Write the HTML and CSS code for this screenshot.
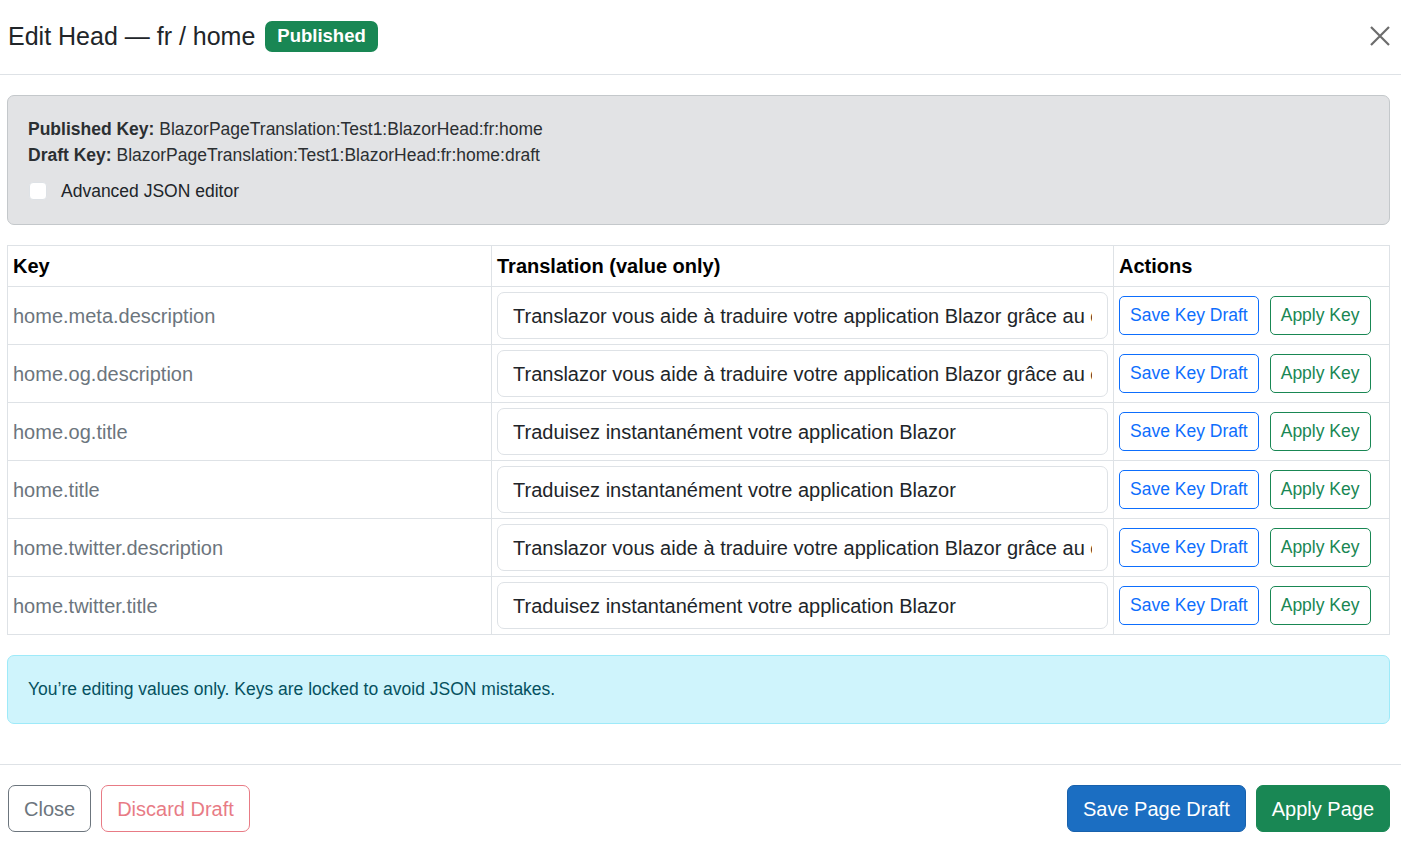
FILE: index.html
```html
<!DOCTYPE html>
<html lang="fr">

<head>
    <meta charset="UTF-8">
    <meta name="viewport" content="width=device-width, initial-scale=1.0">
    <title>Edit Head</title>
    <link rel="stylesheet" href="styles.css">
</head>

<body>

    <div class="modal">
        <div class="modal-header">
            <h5 class="modal-title">Edit Head — fr / home <span class="badge">Published</span></h5>
            <button class="btn-close" aria-label="Close">
                <svg width="20" height="20" viewBox="0 0 20 20">
                    <path d="M1 1 L19 19 M19 1 L1 19" stroke="#6c6c6c" stroke-width="2.2" fill="none" />
                </svg>
            </button>
        </div>

        <div class="modal-body">
            <div class="alert alert-secondary">
                <div><strong>Published Key:</strong> BlazorPageTranslation:Test1:BlazorHead:fr:home</div>
                <div><strong>Draft Key:</strong> BlazorPageTranslation:Test1:BlazorHead:fr:home:draft</div>
                <label class="form-check">
                    <span class="check-box"></span>
                    Advanced JSON editor
                </label>
            </div>

            <table class="keys-table">
                <thead>
                    <tr>
                        <th class="col-key">Key</th>
                        <th class="col-value">Translation (value only)</th>
                        <th class="col-actions">Actions</th>
                    </tr>
                </thead>
                <tbody>
                    <tr>
                        <td class="key">home.meta.description</td>
                        <td><input class="form-control" type="text" value="Translazor vous aide à traduire votre application Blazor grâce au cloud et à l'IA."></td>
                        <td class="actions"><button class="btn btn-sm btn-outline-primary">Save Key Draft</button><button class="btn btn-sm btn-outline-success">Apply Key</button></td>
                    </tr>
                    <tr>
                        <td class="key">home.og.description</td>
                        <td><input class="form-control" type="text" value="Translazor vous aide à traduire votre application Blazor grâce au cloud et à l'IA."></td>
                        <td class="actions"><button class="btn btn-sm btn-outline-primary">Save Key Draft</button><button class="btn btn-sm btn-outline-success">Apply Key</button></td>
                    </tr>
                    <tr>
                        <td class="key">home.og.title</td>
                        <td><input class="form-control" type="text" value="Traduisez instantanément votre application Blazor"></td>
                        <td class="actions"><button class="btn btn-sm btn-outline-primary">Save Key Draft</button><button class="btn btn-sm btn-outline-success">Apply Key</button></td>
                    </tr>
                    <tr>
                        <td class="key">home.title</td>
                        <td><input class="form-control" type="text" value="Traduisez instantanément votre application Blazor"></td>
                        <td class="actions"><button class="btn btn-sm btn-outline-primary">Save Key Draft</button><button class="btn btn-sm btn-outline-success">Apply Key</button></td>
                    </tr>
                    <tr>
                        <td class="key">home.twitter.description</td>
                        <td><input class="form-control" type="text" value="Translazor vous aide à traduire votre application Blazor grâce au cloud et à l'IA."></td>
                        <td class="actions"><button class="btn btn-sm btn-outline-primary">Save Key Draft</button><button class="btn btn-sm btn-outline-success">Apply Key</button></td>
                    </tr>
                    <tr>
                        <td class="key">home.twitter.title</td>
                        <td><input class="form-control" type="text" value="Traduisez instantanément votre application Blazor"></td>
                        <td class="actions"><button class="btn btn-sm btn-outline-primary">Save Key Draft</button><button class="btn btn-sm btn-outline-success">Apply Key</button></td>
                    </tr>
                </tbody>
            </table>

            <div class="alert alert-info">
                You’re editing values only. Keys are locked to avoid JSON mistakes.
            </div>
        </div>

        <div class="modal-footer">
            <div class="footer-left">
                <button class="btn btn-outline-secondary">Close</button>
                <button class="btn btn-outline-danger" disabled>Discard Draft</button>
            </div>
            <div class="footer-right">
                <button class="btn btn-primary">Save Page Draft</button>
                <button class="btn btn-success">Apply Page</button>
            </div>
        </div>
    </div>

</body>

</html>
```

FILE: styles.css
```css
body {
    font-family: "Liberation Sans", Arial, sans-serif;
    font-size: 20px;
    line-height: 1.5;
    color: #212529;
    margin: 0;
    padding: 0;
    background-color: white;
}

.modal {
    display: flex;
    flex-direction: column;
    padding: 0 11px 0 7px;
}

/* header */
.modal-header {
    display: flex;
    align-items: center;
    justify-content: space-between;
    height: 75px;
    box-sizing: border-box;
    padding: 0 11px 3px 8px;
    border-bottom: 1px solid #dee2e6;
    margin: 0 -11px 0 -7px;
}

.modal-title {
    margin: 0;
    font-size: 25px;
    font-weight: 400;
    line-height: 1.2;
    display: flex;
    align-items: center;
    gap: 10px;
}

.badge {
    display: inline-block;
    background-color: #198754;
    color: white;
    font-size: 18.5px;
    font-weight: bold;
    line-height: 1;
    padding: 6px 12px;
    border-radius: 7px;
    margin-top: 2px;
}

.btn-close {
    border: none;
    background: none;
    padding: 0;
    width: 20px;
    height: 20px;
    cursor: pointer;
    display: flex;
    margin-top: 1px;
}

/* body */
.modal-body {
    padding: 20px 0;
}

.alert {
    border: 1px solid transparent;
    border-radius: 7px;
    padding: 20px;
    font-size: 17.5px;
    line-height: 26px;
    margin-bottom: 20px;
}

.alert-secondary {
    background-color: #e2e3e5;
    border-color: #c4c8cb;
    color: #2b2f32;
}

.alert-info {
    background-color: #cff4fc;
    border-color: #9eeaf9;
    color: #055160;
    padding-bottom: 21px;
}

.form-check {
    display: flex;
    align-items: center;
    gap: 14px;
    margin-top: 10px;
    height: 26px;
    color: #212529;
}

.check-box {
    width: 16px;
    height: 16px;
    background-color: white;
    border: 1px solid #dee2e6;
    border-radius: 4px;
    margin-left: 1px;
}

/* table */
.keys-table {
    width: 100%;
    border-collapse: collapse;
    margin-bottom: 20px;
    table-layout: fixed;
}

.keys-table th,
.keys-table td {
    border: 1px solid #dee2e6;
    padding: 5px;
    text-align: left;
    vertical-align: middle;
}

.keys-table th {
    font-weight: bold;
    color: black;
}

.col-key {
    width: 473px;
}

.col-value {
    width: 611px;
}

.keys-table .key {
    color: #6c757d;
}

.form-control {
    display: block;
    width: 100%;
    box-sizing: border-box;
    font-family: inherit;
    font-size: 20px;
    line-height: 1.5;
    color: #212529;
    padding: 7.5px 15px;
    border: 1px solid #dee2e6;
    border-radius: 7px;
    background-color: white;
}

.actions {
    white-space: nowrap;
}

/* buttons */
.btn {
    font-family: inherit;
    font-size: 20px;
    line-height: 1.5;
    padding: 7.5px 15px;
    border: 1px solid transparent;
    border-radius: 7px;
    background-color: transparent;
    cursor: pointer;
}

.btn-sm {
    font-size: 17.5px;
    padding: 5px 10px;
    border-radius: 5px;
}

.actions .btn + .btn {
    margin-left: 11px;
}

.btn-outline-primary {
    color: #0d6efd;
    border-color: #0d6efd;
}

.btn-outline-success {
    color: #198754;
    border-color: #198754;
}

.btn-outline-secondary {
    color: #6c757d;
    border-color: #6c757d;
}

.btn-outline-danger {
    color: #dc3545;
    border-color: #dc3545;
}

.btn:disabled {
    opacity: 0.65;
    cursor: default;
}

.btn-primary {
    color: white;
    background-color: #1b6ec2;
    border-color: #1861ac;
}

.btn-success {
    color: white;
    background-color: #198754;
    border-color: #198754;
}

/* footer */
.modal-footer {
    display: flex;
    justify-content: space-between;
    align-items: center;
    border-top: 1px solid #dee2e6;
    margin: 0 -11px 0 -7px;
    padding: 20px 11px 20px 8px;
}

.footer-left,
.footer-right {
    display: flex;
    gap: 10px;
}
```
